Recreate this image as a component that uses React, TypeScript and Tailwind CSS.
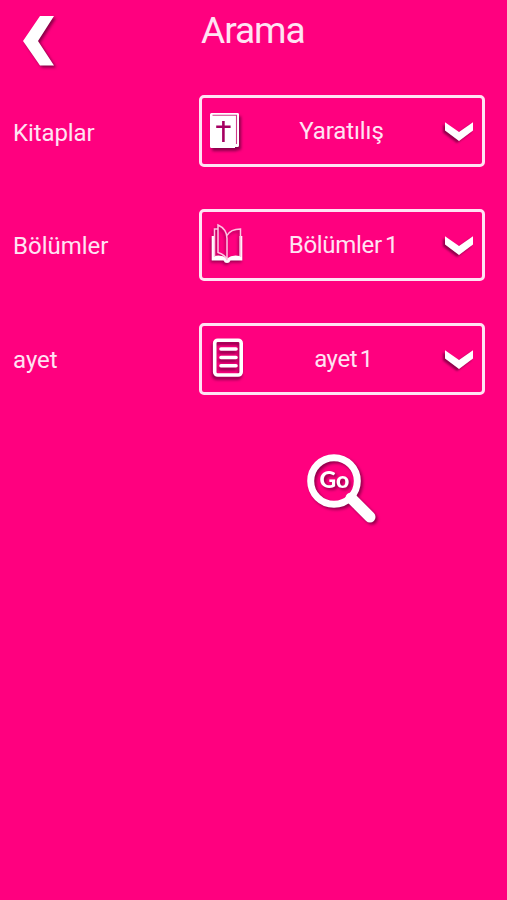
import React from "react";
import clsx from "clsx";

const BibleIcon = () => (
  <svg
    viewBox="0 0 34 44"
    className="w-[34px] h-11 drop-shadow-[2px_3px_1.5px_rgba(60,0,40,0.6)]"
  >
    <path d="M2 5.5Q2 4 3.500 4H30Q31 4 31 5.500V36.500Q31 38 29.500 38H27V39H3.500Q2 39 2 37.500Z" fill="#fff" />
    <path d="M4.500 6.300H28.500V35" fill="none" stroke="#cf3a8a" strokeWidth="1.100" />
    <path d="M15.400 12V33M8.200 17.800H22.600" stroke="#a50061" strokeWidth="2.600" />
  </svg>
);

const OpenBookIcon = () => (
  <svg
    viewBox="0 0 34 44"
    className="w-[34px] h-11 overflow-visible drop-shadow-[-1px_2px_1.5px_rgba(60,0,40,0.5)]"
  >
    <path
      d="M3.700 13H6.500V33Q14 31.500 19 35.500Q24 31.500 31.500 33V13H34.300V37.500H22.500Q21.500 40 19 40Q16.500 40 15.500 37.500H3.700Z"
      fill="#fff"
    />
    <g fill="none" stroke="#ffc4e3" strokeWidth="1.500">
      <path d="M10 2Q19 6 19 15.500V37Q17.500 32 10 29.500Z" />
      <path d="M19 12.500Q22.500 6 32.500 6V34" />
      <path d="M10 6H6.500V34" />
    </g>
  </svg>
);

const PageIcon = () => (
  <svg
    viewBox="0 0 34 44"
    className="w-[34px] h-11 overflow-visible drop-shadow-[-1px_3px_1.5px_rgba(60,0,40,0.6)]"
  >
    <rect x="6.700" y="3.200" width="26.500" height="34.800" rx="3" fill="none" stroke="#fff" strokeWidth="3.600" />
    <path d="M13 12H28M13 20.500H28M13 28.800H28" stroke="#fff" strokeWidth="3.600" strokeLinecap="round" />
  </svg>
);

const ChevronIcon = () => (
  <svg
    viewBox="0 0 28 19"
    className="w-7 h-[19px] drop-shadow-[-2px_2px_1px_rgba(70,0,40,0.6)]"
  >
    <path d="M0 0.300L14 10L28 0.300V8.600L14 19L0 8.600Z" fill="#fff" />
  </svg>
);

const rows = [
  {
    label: "Kitaplar",
    labelStyle: "pt-1 tracking-[-0.1px]",
    value: "Yaratılış",
    valueStyle: "pr-[4px] tracking-[-0.1px]",
    icon: <BibleIcon />,
  },
  {
    label: "Bölümler",
    labelStyle: "pt-0.5",
    value: "Bölümler 1",
    valueStyle: "tracking-[-0.3px] [word-spacing:-2.5px]",
    icon: <OpenBookIcon />,
  },
  {
    label: "ayet",
    labelStyle: "pt-0.5",
    value: "ayet 1",
    valueStyle: "tracking-[-0.4px] [word-spacing:-3px]",
    icon: <PageIcon />,
  },
];

const App = () => {
  return (
    <main className="w-full h-[900px] overflow-hidden bg-[#ff007f] text-[#ffe3f3] font-['Roboto',sans-serif]">
      {/* Header */}
      <header className="flex h-[95px] items-start">
        <button aria-label="Geri" className="ml-[23px] mt-4 w-8">
          <svg
            viewBox="0 0 32 50"
            className="w-8 h-[50px] drop-shadow-[2px_2px_1.5px_rgba(70,0,40,0.65)]"
          >
            <path d="M17 0H31L15 25L31 49.500H17L0 25Z" fill="#fff" />
          </svg>
        </button>
        <h1 className="ml-[146px] mt-2 text-[37px] leading-[46px] font-normal tracking-[-1px]">
          Arama
        </h1>
      </header>

      {/* Selectors */}
      <section className="flex flex-col gap-[42px]">
        {rows.map((row) => (
          <div key={row.label} className="flex h-[72px] items-center">
            <span className={clsx("w-[199px] pl-[13px] text-2xl whitespace-nowrap", row.labelStyle)}>
              {row.label}
            </span>
            <button className="flex h-[72px] w-[286px] items-center rounded-[5px] border-3 border-[#ffe3f3] pl-[6px] pr-[9px]">
              {row.icon}
              <span className={clsx("flex-1 text-center text-2xl whitespace-nowrap", row.valueStyle)}>
                {row.value}
              </span>
              <ChevronIcon />
            </button>
          </div>
        ))}
      </section>

      {/* Search */}
      <div className="mt-[57px] pl-[305px]">
        <button aria-label="Go" className="block">
          <svg
            viewBox="0 0 76 76"
            className="size-[76px] drop-shadow-[2px_2px_1.5px_rgba(70,0,40,0.6)]"
          >
            <circle cx="29" cy="29" r="23.300" fill="none" stroke="#fff" strokeWidth="7" />
            <path d="M46 46L65 65" stroke="#fff" strokeWidth="11" strokeLinecap="round" />
            <text
              x="29.500"
              y="36"
              textAnchor="middle"
              fill="#fff"
              className="font-['Lato',sans-serif] text-[23px] font-black"
            >
              Go
            </text>
          </svg>
        </button>
      </div>
    </main>
  );
};

export default App;
